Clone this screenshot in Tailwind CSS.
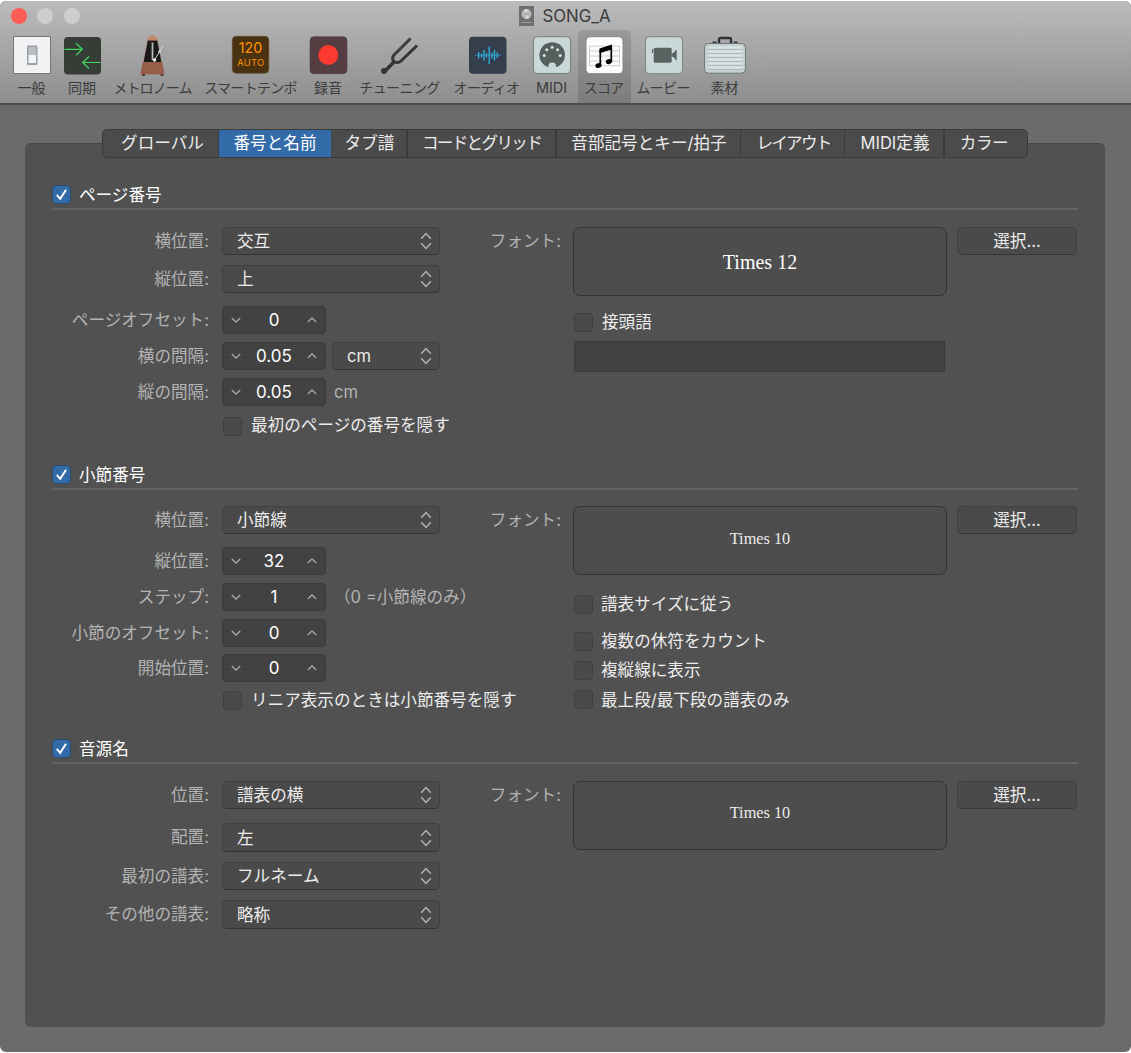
<!DOCTYPE html>
<html lang="ja">

<head>
    <meta charset="utf-8" />
    <meta name="viewport" content="width=device-width, initial-scale=1.0" />
    <title>SONG_A</title>
    <script src="https://cdn.jsdelivr.net/npm/@tailwindcss/browser@4"></script>
</head>

<body class="bg-white font-[Inter,'Noto_Sans_CJK_JP',sans-serif] text-[16.6px] leading-7 text-[#ececec]">
    <!-- shared glyphs -->
    <svg class="hidden">
        <symbol id="updown" viewBox="0 0 12 18">
            <path d="M1.2 6.8 6 1.6l4.800 5.200M1.200 11.200 6 16.400l4.800-5.200" fill="none" stroke="#b4b4b4" stroke-width="1.400" />
        </symbol>
        <symbol id="down" viewBox="0 0 10 6">
            <path d="M.8 1 5 5l4.200-4" fill="none" stroke="#a6a6a6" stroke-width="1.400" />
        </symbol>
        <symbol id="up" viewBox="0 0 10 6">
            <path d="M.8 5 5 1l4.200 4" fill="none" stroke="#a6a6a6" stroke-width="1.400" />
        </symbol>
        <symbol id="check" viewBox="0 0 18 18">
            <path d="M4 9.400 7.600 13.600 13.800 4" fill="none" stroke="#fff" stroke-width="2.100" />
        </symbol>
    </svg>

    <div class="mt-px flex h-[1051px] w-[1131px] flex-col overflow-hidden rounded-md bg-[#6b6b6b]">
        <header class="h-[104px] shrink-0 border-b-2 border-[#4b4b4b] bg-linear-to-b from-[#bcbcbc] to-[#8e8e8e] text-[#3c3c3c]">
            <div class="relative flex h-[29px] items-center">
                <div class="absolute left-[10.500px] flex gap-[10.500px]">
                    <span class="size-4 rounded-full bg-[#fc5d57]"></span>
                    <span class="size-4 rounded-full bg-[#cecece]"></span>
                    <span class="size-4 rounded-full bg-[#cecece]"></span>
                </div>
                <div class="flex w-full items-center justify-center gap-[9px] pr-[2px] text-[16.800px]">
                    <svg class="h-5 w-[15px]" viewBox="0 0 15 20">
                        <rect width="15" height="20" fill="#6f6f6f" />
                        <circle cx="7.500" cy="8" r="5" fill="#b9b9bb" />
                        <path d="M7.500 8 5 3.700A5 5 0 0 1 9 3.300zM7.500 8l3 4A5 5 0 0 1 6 12.800z" fill="#d8d8da" />
                        <circle cx="7.500" cy="8" r="1" fill="#9a9a9a" />
                        <path d="M2 16.500h11" stroke="#aaa" stroke-dasharray="1.500 .6" />
                    </svg>
                    <span>SONG_A</span>
                </div>
            </div>
            <nav class="flex h-[73px] pl-[7px] text-center text-[14px] leading-5">
                <a class="flex w-[49px] flex-col items-center pt-1">
                    <svg class="h-[42px] w-full" viewBox="7 34 49 42">
                        <rect x="13.500" y="36.500" width="37" height="37" fill="#f2f2f5" stroke="#777" />
                        <rect x="27" y="45.500" width="10.500" height="19.500" rx="1" fill="#9ba0a5" />
                        <rect x="28.500" y="47" width="7.500" height="8" fill="#b9bec3" />
                        <rect x="28.500" y="55" width="7.500" height="8" fill="#f3f6f8" />
                    </svg>
                    <span class="mt-0.5">一般</span>
                </a>
                <a class="flex w-[52px] flex-col items-center pt-1">
                    <svg class="h-[42px] w-full" viewBox="56 34 52 42">
                        <rect x="64" y="37" width="37" height="37.500" rx="4" fill="#353d36" />
                        <path d="M64.500 49.300H82m-6-6 6.300 6-6.300 6M100.500 62.500H83m6-6-6.300 6 6.300 6" fill="none" stroke="#44d55d" stroke-width="1.200" />
                    </svg>
                    <span class="mt-0.5">同期</span>
                </a>
                <a class="flex w-[89px] flex-col items-center pt-1">
                    <svg class="h-[42px] w-full" viewBox="108 34 89 42">
                        <path d="M147.500 40h10l6.300 34h-22.600z" fill="#7d5847" />
                        <path d="m147 40 1-2.500 4.500-2.500 4.500 2.500 1 2.500z" fill="#c18b6b" />
                        <path d="M148 41h9l4.300 21.500h-17.600z" fill="#171717" />
                        <path d="M150.800 42h3.400v18h-3.400z" fill="#505050" />
                        <path d="M152.500 43v17" stroke="#bbb" />
                        <path d="m154.500 60 8.500-14" stroke="#d4d4d4" />
                        <circle cx="154.500" cy="60" r="1.800" fill="#eee" />
                        <circle cx="159.500" cy="51.500" r="1.200" fill="#ddd" />
                        <path d="M142.800 62h19.400l2.300 12.300h-24z" fill="#965d48" />
                        <path d="M142 74h3v2h-3zM160.500 74h3v2h-3z" fill="#553a31" />
                    </svg>
                    <span class="mt-0.5 tracking-[-0.9px]">メトロノーム</span>
                </a>
                <a class="flex w-[107px] flex-col items-center pt-1">
                    <svg class="h-[42px] w-full" viewBox="197 34 107 42">
                        <rect x="232.300" y="36.300" width="36.500" height="37" rx="4" fill="#4a3210" stroke="#5a4930" stroke-width=".6" />
                        <text x="250.500" y="53.300" font-size="14.200" text-anchor="middle" fill="#ff9500">120</text>
                        <text x="250.800" y="65.800" font-size="9.300" letter-spacing=".3" text-anchor="middle" fill="#ff9500">AUTO</text>
                    </svg>
                    <span class="mt-0.5 tracking-[-0.7px]">スマートテンポ</span>
                </a>
                <a class="flex w-12 flex-col items-center pt-1">
                    <svg class="h-[42px] w-full" viewBox="304 34 48 42">
                        <rect x="310" y="36.700" width="37" height="37" rx="4" fill="#543e42" stroke="#4b4244" stroke-width=".6" />
                        <circle cx="328.300" cy="55" r="10" fill="#ff3a30" />
                    </svg>
                    <span class="mt-0.5">録音</span>
                </a>
                <a class="flex w-[95px] flex-col items-center pt-1">
                    <svg class="h-[42px] w-full" viewBox="352 34 95 42">
                        <path d="m410.500 38.500-16.500 16.500c-2.500 3-1 5.500 0 6.500s4.500 2 7-.5L417 45.500" fill="none" stroke="#353535" stroke-width="3" />
                        <path d="m394.500 61.500-9 9" stroke="#353535" stroke-width="3.600" />
                        <circle cx="384" cy="71" r="3" fill="#353535" />
                        <path d="M409.500 39 393.500 55" stroke="#686868" stroke-width=".6" />
                    </svg>
                    <span class="mt-0.5 tracking-[-0.6px]">チューニング</span>
                </a>
                <a class="flex w-20 flex-col items-center pt-1">
                    <svg class="h-[42px] w-full" viewBox="447 34 80 42">
                        <rect x="469" y="36.700" width="37.500" height="37" rx="4" fill="#343e4c" />
                        <path d="M475 55.200h26" stroke="#2aa0cc" stroke-width=".8" />
                        <path d="M478.700 52v6.500M481.500 53.500v4M484 50v10.500M486.500 53v4.500M489.200 46.500v17.500M492 52.500v6M494.500 50v10.500M497.200 52.500v5.500" stroke="#32b3e2" stroke-width="1.300" />
                    </svg>
                    <span class="mt-0.5 pr-px tracking-[-0.6px]">オーディオ</span>
                </a>
                <a class="flex w-[49px] flex-col items-center pt-1">
                    <svg class="h-[42px] w-full" viewBox="527 34 49 42">
                        <rect x="533.500" y="36.700" width="37" height="36.800" rx="4" fill="#c9d8d9" stroke="#74807f" />
                        <circle cx="552.200" cy="55" r="12.800" fill="#555f5e" />
                        <path d="M548.500 69v-3.500q0-3 3.700-3t3.700 3V69z" fill="#c9d8d9" />
                        <g fill="#d9e4e4">
                            <circle cx="544.200" cy="55.500" r="1.500" />
                            <circle cx="546.800" cy="49.700" r="1.500" />
                            <circle cx="552.200" cy="47.300" r="1.500" />
                            <circle cx="557.600" cy="49.700" r="1.500" />
                            <circle cx="560.200" cy="55.500" r="1.500" />
                        </g>
                    </svg>
                    <span class="mt-0.5 text-[14.400px]">MIDI</span>
                </a>
                <a class="ml-[1.500px] flex w-[53px] flex-col items-center rounded-t-[5px] bg-black/12 pt-1">
                    <svg class="h-[42px] w-full" viewBox="577.500 34 53 42">
                        <rect x="585.500" y="36.700" width="37" height="37" rx="4" fill="#fcfcfc" stroke="#858585" />
                        <path d="M589 46.200h30v19.500h-30zM589 51h30M589 56h30M589 61h30" fill="none" stroke="#c4c4c4" stroke-width=".8" />
                        <path d="m599 48.500 12.500-4v4.700L599 53.300z" fill="#000" />
                        <path d="M599.800 50v14.500M610.800 47v14.500" stroke="#000" stroke-width="1.700" />
                        <ellipse cx="598" cy="65.500" rx="3.200" ry="2.400" transform="rotate(-18 598 65.500)" />
                        <ellipse cx="608.500" cy="61.600" rx="3.200" ry="2.400" transform="rotate(-18 608.500 61.600)" />
                    </svg>
                    <span class="mt-0.5 pr-px tracking-[-0.8px]">スコア</span>
                </a>
                <a class="flex w-[65px] flex-col items-center pt-1">
                    <svg class="h-[42px] w-full" viewBox="631 34 65 42">
                        <rect x="645.500" y="36.700" width="37" height="37" rx="4" fill="#cad8da" stroke="#788483" />
                        <rect x="653.700" y="47.700" width="18" height="15" rx="1.500" fill="#596362" />
                        <path d="M671.500 53.300h1.500l3.700-4v11.500l-3.700-4h-1.500zM652 49h1v4h-1z" fill="#596362" />
                    </svg>
                    <span class="mt-0.5 tracking-[-0.6px]">ムービー</span>
                </a>
                <a class="flex w-[58px] flex-col items-center pt-1">
                    <svg class="h-[42px] w-full" viewBox="696 34 58 42">
                        <path d="M719 43v-3.500q0-1.500 1.500-1.500h9q1.500 0 1.500 1.500V43" fill="none" stroke="#2f3333" stroke-width="2.400" />
                        <path d="M712.500 42.300h4M733.500 42.300h4" stroke="#3d4141" stroke-width="1.500" />
                        <rect x="704.500" y="43.500" width="41" height="29.700" rx="4" fill="#c5d0d1" stroke="#6c7777" />
                        <path d="M708.500 47.500h34M708.500 51.500h34M708.500 55.500h34M708.500 59.500h34M708.500 63.500h34M708.500 67.500h34" stroke="#dce5e7" stroke-width="1.800" />
                        <path d="M708 49.500h34.500M708 53.500h34.500M708 57.500h34.500M708 61.500h34.500M708 65.500h34.500M708 69.500h34.500" stroke="#a9b6b7" stroke-width=".8" />
                    </svg>
                    <span class="mt-0.5">素材</span>
                </a>
            </nav>
        </header>

        <main class="mt-[38px] mr-[26px] ml-[25px] flex h-[884px] shrink-0 flex-col rounded-md border-t border-[#474747] bg-[#515151] px-[27px]">
            <div class="-mt-[15px] ml-[50px] flex h-[29px] w-[926px] shrink-0 overflow-hidden rounded-[5px] border border-[#3b3b3b] bg-[#4b4b4b] text-center leading-[27px]">
                <div class="w-[116px] border-r border-[#3b3b3b] pl-1">グローバル</div>
                <div class="w-[112px] bg-[#336aa8] text-white">番号と名前</div>
                <div class="w-[77px] border-r-2 border-[#3b3b3b] pl-0.5">タブ譜</div>
                <div class="w-[149px] border-r-2 border-[#3b3b3b] tracking-[-1.700px]">コードとグリッド</div>
                <div class="w-[184px] border-r border-[#3b3b3b] pl-px">音部記号とキー/拍子</div>
                <div class="w-[104px] border-r border-[#3b3b3b] pl-0.5 tracking-[-1.800px]">レイアウト</div>
                <div class="w-[100px] border-r-2 border-[#3b3b3b] pl-0.5">MIDI定義</div>
                <div class="flex-1 pr-1 tracking-[-0.5px]">カラー</div>
            </div>

            <!-- page numbers -->
            <section class="mt-[23px] h-[280px]">
                <h2 class="flex h-[29px] items-center gap-2 border-b-2 border-[#636363] text-white">
                    <svg class="size-[19px] rounded-[4px] border border-[#2c4a6c] bg-[#336aa8]"><use href="#check" /></svg>
                    ページ番号
                </h2>
                <div class="flex pt-[17px]">
                    <div class="w-[388px]">
                        <div class="flex gap-3">
                            <span class="w-[158px] pr-px text-right text-[#b3b3b3]">横位置:</span>
                            <div class="flex h-7 w-[218px] items-center justify-between rounded-[5px] border border-[#404040] border-b-[#333] bg-[#4a4a4a] pr-[7px] pl-[14px]">交互<svg class="h-[18px] w-3"><use href="#updown" /></svg></div>
                        </div>
                        <div class="mt-[10px] flex gap-3">
                            <span class="w-[158px] pr-px text-right text-[#b3b3b3]">縦位置:</span>
                            <div class="flex h-7 w-[218px] items-center justify-between rounded-[5px] border border-[#404040] border-b-[#333] bg-[#4a4a4a] pr-[7px] pl-[14px]">上<svg class="h-[18px] w-3"><use href="#updown" /></svg></div>
                        </div>
                        <div class="mt-[13px] flex gap-3">
                            <span class="w-[158px] pr-px text-right text-[#b3b3b3]">ページオフセット:</span>
                            <div class="flex h-7 w-[104px] items-center justify-between rounded-[4px] border border-[#3b3b3b] bg-[#424242] px-2 text-[17px] text-white"><svg class="h-1.5 w-2.5"><use href="#down" /></svg>0<svg class="h-1.5 w-2.5"><use href="#up" /></svg></div>
                        </div>
                        <div class="mt-2 flex gap-3">
                            <span class="w-[158px] pr-px text-right text-[#b3b3b3]">横の間隔:</span>
                            <div class="flex h-7 w-[104px] items-center justify-between rounded-[4px] border border-[#3b3b3b] bg-[#424242] px-2 text-[17px] text-white"><svg class="h-1.5 w-2.5"><use href="#down" /></svg>0.05<svg class="h-1.5 w-2.5"><use href="#up" /></svg></div>
                            <div class="-ml-[6px] flex h-7 w-[108px] items-center justify-between rounded-[5px] border border-[#404040] border-b-[#333] bg-[#4a4a4a] pr-[7px] pl-[14px]">cm<svg class="h-[18px] w-3"><use href="#updown" /></svg></div>
                        </div>
                        <div class="mt-2 flex gap-3">
                            <span class="w-[158px] pr-px text-right text-[#b3b3b3]">縦の間隔:</span>
                            <div class="flex h-7 w-[104px] items-center justify-between rounded-[4px] border border-[#3b3b3b] bg-[#424242] px-2 text-[17px] text-white"><svg class="h-1.5 w-2.5"><use href="#down" /></svg>0.05<svg class="h-1.5 w-2.5"><use href="#up" /></svg></div>
                            <span class="-ml-1 text-[#b3b3b3]">cm</span>
                        </div>
                        <div class="mt-[5px] ml-[171px] flex items-center gap-[9px] whitespace-nowrap">
                            <span class="mt-0.5 size-[19px] shrink-0 rounded-[4px] border border-[#3f3f3f] bg-[#4a4a4a]"></span>最初のページの番号を隠す
                        </div>
                    </div>
                    <span class="w-[121px] text-right text-[#b3b3b3]">フォント:</span>
                    <div class="ml-3 w-[374px]">
                        <div class="flex h-[69px] items-center justify-center rounded-[7px] border border-[#333] bg-[#4d4d4d] font-['Liberation_Serif',serif] text-[20px] text-white">Times 12</div>
                        <div class="mt-3 ml-px flex items-center gap-[9px]">
                            <span class="size-[19px] rounded-[4px] border border-[#3f3f3f] bg-[#4a4a4a]"></span>接頭語
                        </div>
                        <div class="mt-[5px] ml-px h-[31px] w-[371px] border border-[#3a3a3a] bg-[#424242]"></div>
                    </div>
                    <div class="ml-[10px] h-7 w-[120px] rounded-[5px] border border-[#404040] border-b-[#363636] bg-[#4a4a4a] text-center leading-[27px]">選択...</div>
                </div>
            </section>

            <!-- bar numbers -->
            <section class="h-[274px]">
                <h2 class="flex h-[29px] items-center gap-2 border-b-2 border-[#636363] text-white">
                    <svg class="size-[19px] rounded-[4px] border border-[#2c4a6c] bg-[#336aa8]"><use href="#check" /></svg>
                    小節番号
                </h2>
                <div class="flex pt-4">
                    <div class="w-[388px]">
                        <div class="flex gap-3">
                            <span class="w-[158px] pr-px text-right text-[#b3b3b3]">横位置:</span>
                            <div class="flex h-7 w-[218px] items-center justify-between rounded-[5px] border border-[#404040] border-b-[#333] bg-[#4a4a4a] pr-[7px] pl-[14px]">小節線<svg class="h-[18px] w-3"><use href="#updown" /></svg></div>
                        </div>
                        <div class="mt-[13px] flex gap-3">
                            <span class="w-[158px] pr-px text-right text-[#b3b3b3]">縦位置:</span>
                            <div class="flex h-7 w-[104px] items-center justify-between rounded-[4px] border border-[#3b3b3b] bg-[#424242] px-2 text-[17px] text-white"><svg class="h-1.5 w-2.5"><use href="#down" /></svg>32<svg class="h-1.5 w-2.5"><use href="#up" /></svg></div>
                        </div>
                        <div class="mt-2 flex gap-3">
                            <span class="w-[158px] shrink-0 pr-px text-right text-[#b3b3b3]">ステップ:</span>
                            <div class="flex h-7 w-[104px] shrink-0 items-center justify-between rounded-[4px] border border-[#3b3b3b] bg-[#424242] px-2 text-[17px] text-white"><svg class="h-1.5 w-2.5"><use href="#down" /></svg>1<svg class="h-1.5 w-2.5"><use href="#up" /></svg></div>
                            <span class="-ml-1 whitespace-nowrap text-[#b3b3b3]">（0 =小節線のみ）</span>
                        </div>
                        <div class="mt-2 flex gap-3">
                            <span class="w-[158px] pr-px text-right text-[#b3b3b3]">小節のオフセット:</span>
                            <div class="flex h-7 w-[104px] items-center justify-between rounded-[4px] border border-[#3b3b3b] bg-[#424242] px-2 text-[17px] text-white"><svg class="h-1.5 w-2.5"><use href="#down" /></svg>0<svg class="h-1.5 w-2.5"><use href="#up" /></svg></div>
                        </div>
                        <div class="mt-[7px] flex gap-3">
                            <span class="w-[158px] pr-px text-right text-[#b3b3b3]">開始位置:</span>
                            <div class="flex h-7 w-[104px] items-center justify-between rounded-[4px] border border-[#3b3b3b] bg-[#424242] px-2 text-[17px] text-white"><svg class="h-1.5 w-2.5"><use href="#down" /></svg>0<svg class="h-1.5 w-2.5"><use href="#up" /></svg></div>
                        </div>
                        <div class="mt-1 ml-[171px] flex items-center gap-[9px] whitespace-nowrap">
                            <span class="size-[19px] shrink-0 rounded-[4px] border border-[#3f3f3f] bg-[#4a4a4a]"></span>リニア表示のときは小節番号を隠す
                        </div>
                    </div>
                    <span class="w-[121px] text-right text-[#b3b3b3]">フォント:</span>
                    <div class="ml-3 w-[374px]">
                        <div class="flex h-[69px] items-center justify-center rounded-[7px] border border-[#333] bg-[#4d4d4d] pb-[3px] font-['Liberation_Serif',serif] text-[16.300px]">Times 10</div>
                        <div class="mt-[15px] ml-px flex items-center gap-2">
                            <span class="size-[19px] rounded-[4px] border border-[#3f3f3f] bg-[#4a4a4a]"></span>譜表サイズに従う
                        </div>
                        <div class="mt-[9px] ml-px flex items-center gap-2">
                            <span class="size-[19px] rounded-[4px] border border-[#3f3f3f] bg-[#4a4a4a]"></span>複数の休符をカウント
                        </div>
                        <div class="mt-px ml-px flex items-center gap-2">
                            <span class="size-[19px] rounded-[4px] border border-[#3f3f3f] bg-[#4a4a4a]"></span>複縦線に表示
                        </div>
                        <div class="mt-[1.500px] ml-px flex items-center gap-2">
                            <span class="size-[19px] rounded-[4px] border border-[#3f3f3f] bg-[#4a4a4a]"></span>最上段/最下段の譜表のみ
                        </div>
                    </div>
                    <div class="ml-[10px] h-7 w-[120px] rounded-[5px] border border-[#404040] border-b-[#363636] bg-[#4a4a4a] text-center leading-[27px]">選択...</div>
                </div>
            </section>

            <!-- instrument names -->
            <section>
                <h2 class="flex h-[29px] items-center gap-2 border-b-2 border-[#636363] text-white">
                    <svg class="size-[19px] rounded-[4px] border border-[#2c4a6c] bg-[#336aa8]"><use href="#check" /></svg>
                    音源名
                </h2>
                <div class="flex pt-[17px]">
                    <div class="w-[388px]">
                        <div class="flex gap-3">
                            <span class="w-[158px] pr-px text-right text-[#b3b3b3]">位置:</span>
                            <div class="flex h-7 w-[218px] items-center justify-between rounded-[5px] border border-[#404040] border-b-[#333] bg-[#4a4a4a] pr-[7px] pl-[14px]">譜表の横<svg class="h-[18px] w-3"><use href="#updown" /></svg></div>
                        </div>
                        <div class="mt-[14px] flex gap-3">
                            <span class="w-[158px] pr-px text-right text-[#b3b3b3]">配置:</span>
                            <div class="flex h-[29px] w-[218px] items-center justify-between rounded-[5px] border border-[#404040] border-b-[#333] bg-[#4a4a4a] pr-[7px] pl-[14px]">左<svg class="h-[18px] w-3"><use href="#updown" /></svg></div>
                        </div>
                        <div class="mt-[10px] flex gap-3">
                            <span class="w-[158px] pr-px text-right text-[#b3b3b3]">最初の譜表:</span>
                            <div class="flex h-7 w-[218px] items-center justify-between rounded-[5px] border border-[#404040] border-b-[#333] bg-[#4a4a4a] pr-[7px] pl-[14px]">フルネーム<svg class="h-[18px] w-3"><use href="#updown" /></svg></div>
                        </div>
                        <div class="mt-[10px] flex gap-3">
                            <span class="w-[158px] pr-px text-right text-[#b3b3b3]">その他の譜表:</span>
                            <div class="flex h-[29px] w-[218px] items-center justify-between rounded-[5px] border border-[#404040] border-b-[#333] bg-[#4a4a4a] pr-[7px] pl-[14px]">略称<svg class="h-[18px] w-3"><use href="#updown" /></svg></div>
                        </div>
                    </div>
                    <span class="w-[121px] text-right text-[#b3b3b3]">フォント:</span>
                    <div class="ml-3 w-[374px]">
                        <div class="flex h-[69px] items-center justify-center rounded-[7px] border border-[#333] bg-[#4d4d4d] pb-[5px] font-['Liberation_Serif',serif] text-[16.300px]">Times 10</div>
                    </div>
                    <div class="ml-[10px] h-7 w-[120px] rounded-[5px] border border-[#404040] border-b-[#363636] bg-[#4a4a4a] text-center leading-[27px]">選択...</div>
                </div>
            </section>
        </main>
    </div>
</body>

</html>
